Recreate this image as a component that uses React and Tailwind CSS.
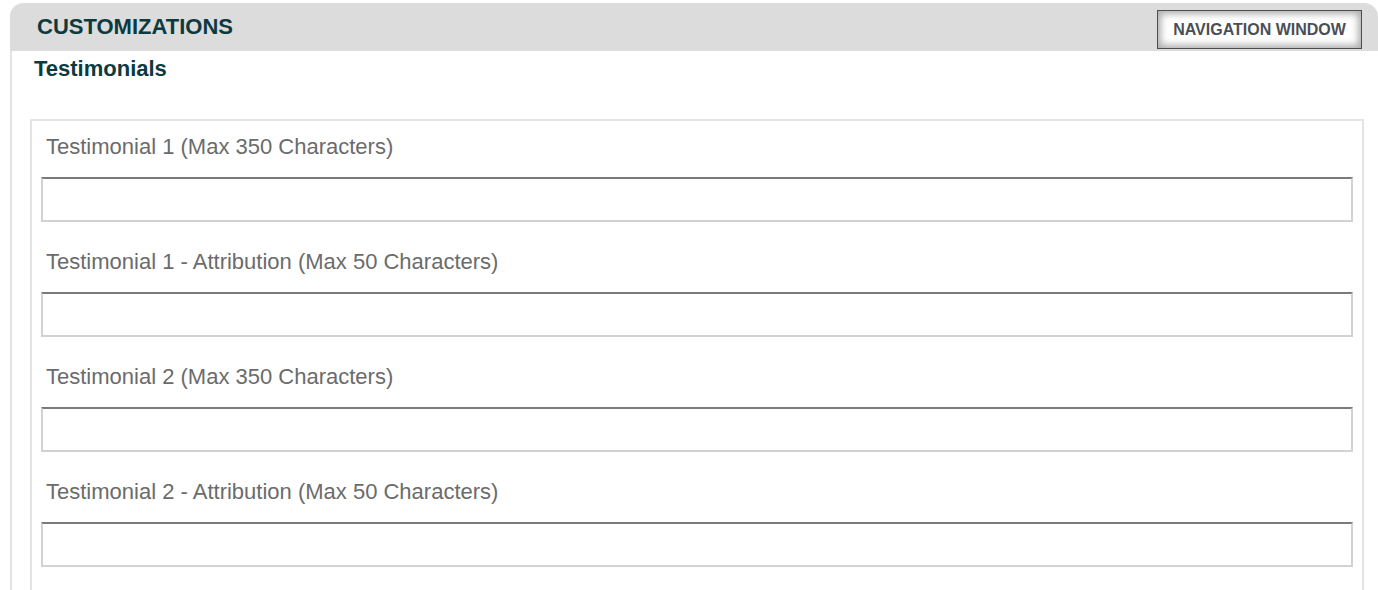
const fields = [
  "Testimonial 1 (Max 350 Characters)",
  "Testimonial 1 - Attribution (Max 50 Characters)",
  "Testimonial 2 (Max 350 Characters)",
  "Testimonial 2 - Attribution (Max 50 Characters)",
];

function Field({ label }) {
  return (
    <div className="pb-[27px]">
      <label className="block h-[26px] pl-[5px] text-[22px] leading-[26px] text-[#6b6b6b]">
        {label}
      </label>
      <input
        type="text"
        className="mt-[17px] block h-[45px] w-full border-2 border-[#d2d2d2] border-t-[#7a7a7a] bg-white outline-none"
      />
    </div>
  );
}

export default function App() {
  return (
    <div
      className="h-[590px] overflow-hidden bg-white pt-[3px] pl-[10px]"
      style={{ fontFamily: '"Liberation Sans", Arial, sans-serif' }}
    >
      <div className="h-[700px] rounded-tl-[14px] rounded-tr-[14px] border-l-2 border-[#e2e2e2]">
        <div className="-ml-[2px] flex h-[48px] items-center justify-between rounded-tl-[14px] rounded-tr-[14px] bg-[#dcdcdc] pl-[27px] pr-[16px]">
          <h2 className="text-[22px] font-bold leading-none text-[#0d3a40]">
            CUSTOMIZATIONS
          </h2>
          <button className="mt-[5px] flex h-[39px] w-[205px] items-center justify-center border border-[#4d4d4d] bg-white text-[16px] font-bold text-[#4a4f57] shadow-[inset_0_0_7px_3px_rgba(0,0,0,0.32)]">
            NAVIGATION WINDOW
          </button>
        </div>
        <div className="pl-[22px] pr-[14px]">
          <h3 className="pt-[6px] text-[22px] font-bold leading-[24px] text-[#0d3a40]">
            Testimonials
          </h3>
          <div className="ml-[-4px] mt-[38px] h-[600px] border-2 border-[#e4e4e4] px-[9px] pt-[13px]">
            {fields.map((f, i) => (
              <Field key={i} label={f} />
            ))}
          </div>
        </div>
      </div>
    </div>
  );
}
